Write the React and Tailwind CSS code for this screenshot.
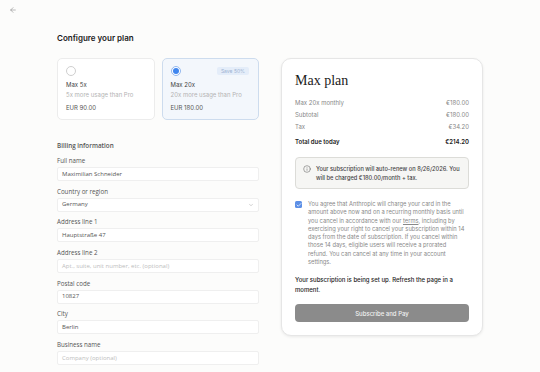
import { ArrowLeft, Info, ChevronDown, Check } from 'lucide-react';

const fields = [
  { label: 'Full name', value: 'Maximilian Schneider' },
  { label: 'Country or region', value: 'Germany', select: true },
  { label: 'Address line 1', value: 'Hauptstraße 47' },
  { label: 'Address line 2', placeholder: 'Apt., suite, unit number, etc. (optional)' },
  { label: 'Postal code', value: '10827' },
  { label: 'City', value: 'Berlin' },
  { label: 'Business name', placeholder: 'Company (optional)' },
];

function Field({ label, value, placeholder, select }) {
  return (
    <div className="flex flex-col">
      <div className="text-[6.2px] leading-[9px] text-[#555]">{label}</div>
      <div className="mt-[2px] h-[14px] rounded-[2px] border border-[#efefef] bg-white px-[4px] flex items-center justify-between">
        <span className={value ? 'text-[6px] text-[#555]' : 'text-[6px] text-[#bdbdbd]'}>
          {value || placeholder}
        </span>
        {select && <ChevronDown size={6} strokeWidth={1.5} className="text-[#888]" />}
      </div>
    </div>
  );
}

function PlanCard({ title, sub, price, selected, badge }) {
  return (
    <div
      className={
        selected
          ? 'h-[62px] rounded-[5px] border border-[#cddcee] bg-[#f3f7fc] pl-[8px] pr-[9px] pt-[7px]'
          : 'h-[62px] rounded-[5px] border border-[#ececec] bg-white pl-[8px] pr-[9px] pt-[7px]'
      }
    >
      <div className="flex items-center justify-between h-[10px]">
        {selected ? (
          <div className="w-[10px] h-[10px] rounded-full border border-[#93b8ef] bg-white flex items-center justify-center">
            <div className="w-[6px] h-[6px] rounded-full bg-[#3f86ef]" />
          </div>
        ) : (
          <div className="w-[10px] h-[10px] rounded-full border border-[#cfcfcf] bg-white" />
        )}
        {badge && (
          <span className="rounded-[2px] bg-[#e4edf9] px-[4px] text-[5px] leading-[8px] text-[#9cb2d2]">{badge}</span>
        )}
      </div>
      <div className="mt-[5px] text-[6px] leading-[8px] text-[#444]">{title}</div>
      <div className="mt-[2px] text-[6px] leading-[8px] text-[#b3b3b3]">{sub}</div>
      <div className="mt-[5px] text-[6px] leading-[8px] text-[#555]">{price}</div>
    </div>
  );
}

function Row({ label, value, strong }) {
  return (
    <div
      className={
        strong
          ? 'flex justify-between text-[6px] leading-[8px] font-semibold text-[#222]'
          : 'flex justify-between text-[6px] leading-[8px] text-[#888]'
      }
    >
      <span>{label}</span>
      <span>{value}</span>
    </div>
  );
}

export default function App() {
  return (
    <div className="min-h-[372px] w-full bg-[#fcfcfb] font-['Inter',sans-serif] relative">
      <div className="pl-[9px] pt-[6px] h-[33px]">
        <ArrowLeft size={8} strokeWidth={1.5} className="text-[#777]" />
      </div>
      <div className="mx-auto w-[426px] flex items-start gap-[22px]">
        <div className="w-[202px] shrink-0">
          <h1 className="text-[8px] leading-[10px] font-semibold text-[#1a1a1a]">Configure your plan</h1>
          <div className="mt-[15px] grid grid-cols-2 gap-[7px]">
            <PlanCard title="Max 5x" sub="5x more usage than Pro" price="EUR 90.00" />
            <PlanCard title="Max 20x" sub="20x more usage than Pro" price="EUR 180.00" selected badge="Save 50%" />
          </div>
          <div className="mt-[21px] font-['Open_Sans',sans-serif]">
            <div className="text-[6.3px] leading-[9px] font-semibold text-[#555]">Billing information</div>
            <div className="mt-[6px] flex flex-col gap-[5.7px]">
              {fields.map((f) => (
                <Field key={f.label} {...f} />
              ))}
            </div>
          </div>
        </div>

        <div className="mt-[25px] w-[202px] shrink-0 rounded-[10px] border border-[#e6e6e6] bg-white px-[13px] pt-[14px] pb-[13px] shadow-[0_1px_3px_rgba(0,0,0,0.08)]">
          <div className="font-['Liberation_Serif',serif] text-[14px] leading-[16px] text-[#1a1a1a]">Max plan</div>
          <div className="mt-[10px] flex flex-col gap-[4px]">
            <Row label="Max 20x monthly" value="€180.00" />
            <Row label="Subtotal" value="€180.00" />
            <Row label="Tax" value="€34.20" />
          </div>
          <div className="mt-[7px]">
            <Row label="Total due today" value="€214.20" strong />
          </div>
          <div className="mt-[11px] flex gap-[5px] rounded-[4px] border border-[#dcdcd8] bg-[#f6f6f4] pl-[7px] pr-[4px] py-[6px]">
            <Info size={8} strokeWidth={1.5} className="mt-[0.5px] shrink-0 text-[#555]" />
            <p className="text-[5.7px] leading-[9px] font-medium text-[#444]">
              Your subscription will auto-renew on 8/26/2026. You will be charged €180.00/month + tax.
            </p>
          </div>
          <div className="mt-[11px] flex gap-[6px]">
            <div className="mt-[1px] w-[7px] h-[7px] shrink-0 rounded-[1.5px] bg-[#5c8fe6] flex items-center justify-center">
              <Check size={6} strokeWidth={3} className="text-white" />
            </div>
            <p className="pr-[3px] text-[5.75px] leading-[8.3px] text-[#888]">
              You agree that Anthropic will charge your card in the amount above now and on a recurring monthly basis until
              you cancel in accordance with our <span className="underline">terms</span>, including by exercising your right to
              cancel your subscription within 14 days from the date of subscription. If you cancel within those 14 days,
              eligible users will receive a prorated refund. You can cancel at any time in your account settings.
            </p>
          </div>
          <p className="mt-[9px] text-[6px] leading-[9.4px] font-medium text-[#222]">
            Your subscription is being set up. Refresh the page in a moment.
          </p>
          <button className="mt-[10px] h-[18px] w-full rounded-[4px] bg-[#8b8b8b] text-[6px] font-medium text-[#f2f2f2]">
            Subscribe and Pay
          </button>
        </div>
      </div>
    </div>
  );
}
